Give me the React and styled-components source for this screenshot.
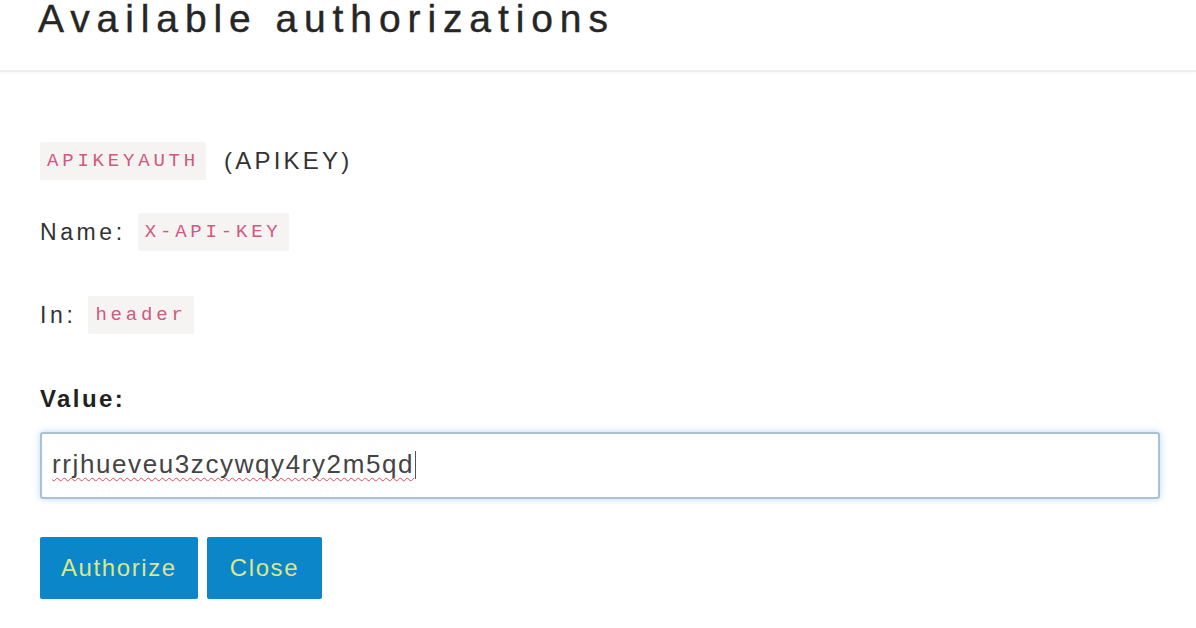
import React from "react";
import styled, { createGlobalStyle } from "styled-components";

const Global = createGlobalStyle`
  html, body { margin: 0; padding: 0; background: #ffffff; }
  body { font-family: "Liberation Sans", Arial, sans-serif; color: #333333; overflow: hidden; }
`;

const Dialog = styled.div`
  width: 1196px;
  height: 628px;
  background: #ffffff;
  overflow: hidden;
`;

const Header = styled.header`
  display: flex;
  align-items: flex-start;
  height: 70px;
  padding: 0 38px;
  border-bottom: 2px solid #ededed;
  box-shadow: 0 1px 2px rgba(0, 0, 0, 0.03);
`;

const Title = styled.h2`
  margin: 0;
  font-weight: 400;
  font-size: 39px;
  line-height: 38px;
  letter-spacing: 6.9px;
  color: #262626;
  white-space: nowrap;
  -webkit-text-stroke: 0.4px #262626;
`;

const Body = styled.div`
  padding: 0 36px 0 40px;
  display: flex;
  flex-direction: column;
`;

const Row = styled.div`
  display: flex;
  align-items: center;
  height: 38px;
  margin-top: ${(p) => p.$top}px;
  gap: ${(p) => p.$gap || 0}px;
`;

const Code = styled.code`
  display: inline-flex;
  align-items: center;
  height: 38px;
  padding: 0 ${(p) => p.$pad || 7}px;
  background: #f6f3f3;
  color: #d3577f;
  font-family: "Liberation Mono", "Courier New", monospace;
  font-size: 19px;
  letter-spacing: ${(p) => p.$ls || 3.8}px;
  border-radius: 2px;
`;

const Text = styled.span`
  font-size: ${(p) => p.$size || 24}px;
  letter-spacing: ${(p) => p.$ls || 0}px;
  color: #333333;
`;

const ValueLabel = styled.label`
  margin-top: ${(p) => p.$top}px;
  font-size: 24px;
  font-weight: 700;
  letter-spacing: 2.4px;
  color: #222222;
  line-height: 28px;
`;

const InputBox = styled.div`
  margin-top: 19px;
  height: 67px;
  box-sizing: border-box;
  border: 2px solid #a9c2d6;
  border-radius: 3px;
  box-shadow: 0 0 7px rgba(102, 175, 233, 0.45);
  display: flex;
  align-items: center;
  padding: 0 10px 2px;
  background: #ffffff;
`;

const Typed = styled.span`
  font-size: 26px;
  letter-spacing: 1.6px;
  color: #444444;
  text-decoration: underline wavy #e04a55;
  text-decoration-thickness: 1px;
  text-decoration-skip-ink: none;
  text-underline-offset: 4px;
`;

const Caret = styled.span`
  display: inline-block;
  width: 1px;
  height: 28px;
  background: #555;
  margin-left: 1px;
`;

const Buttons = styled.div`
  display: flex;
  gap: 9px;
  margin-top: 38px;
`;

const Button = styled.button`
  height: 62px;
  padding: 0 ${(p) => p.$pad}px;
  border: none;
  border-radius: 2px;
  background: #0b86c8;
  color: #dce68c;
  font-family: "Liberation Sans", Arial, sans-serif;
  font-size: 24px;
  letter-spacing: 1.6px;
  cursor: pointer;
`;

export default function App() {
  return (
    <>
      <Global />
      <Dialog>
        <Header>
          <Title>Available authorizations</Title>
        </Header>
        <Body>
          <Row $top={70} $gap={18}>
            <Code>APIKEYAUTH</Code>
            <Text $ls={3.2}>(APIKEY)</Text>
          </Row>
          <Row $top={33} $gap={12}>
            <Text $size={23} $ls={3.6}>Name:</Text>
            <Code>X-API-KEY</Code>
          </Row>
          <Row $top={45} $gap={12}>
            <Text $size={23} $ls={3.6}>In:</Text>
            <Code>header</Code>
          </Row>
          <ValueLabel $top={51}>Value:</ValueLabel>
          <InputBox>
            <Typed>rrjhueveu3zcywqy4ry2m5qd</Typed>
            <Caret />
          </InputBox>
          <Buttons>
            <Button $pad={21}>Authorize</Button>
            <Button $pad={23}>Close</Button>
          </Buttons>
        </Body>
      </Dialog>
    </>
  );
}
